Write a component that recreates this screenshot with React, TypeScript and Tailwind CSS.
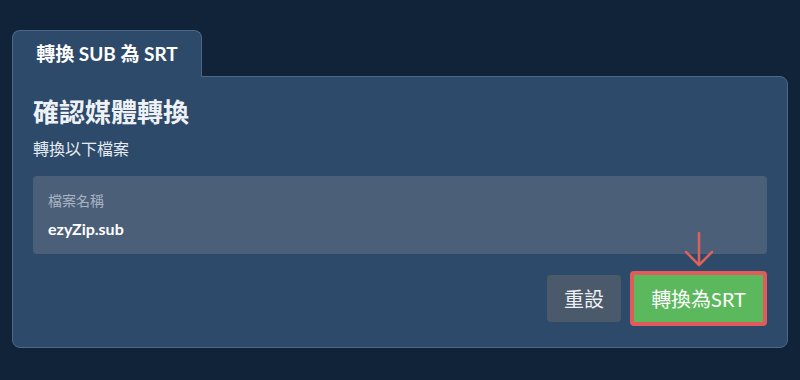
import React from "react";

export default function App() {
  return (
    <div className="w-[800px] h-[380px] bg-[#112339] pt-[30px] px-3 font-['Lato','Noto_Sans_CJK_TC',sans-serif] text-white">
      {/* Tab */}
      <div className="relative z-10 -mb-px w-[190px] h-[47px] rounded-t-lg border border-b-0 border-[#4d6787] bg-[#2d4a6a] flex items-center justify-center">
        <span className="text-[19px] font-bold">轉換 SUB 為 SRT</span>
      </div>

      {/* Card */}
      <div className="w-[776px] h-[272px] rounded-b-lg rounded-tr-lg border border-[#4d6787] bg-[#2d4a6a] px-5 pt-[19px]">
        <h2 className="text-[26px] font-bold leading-[32px] text-[#eef2f6]">確認媒體轉換</h2>
        <p className="mt-[11px] text-[16px] leading-[20px] text-[#e6ebf1]">轉換以下檔案</p>

        <div className="mt-[17px] h-[78px] rounded bg-[#4b5f78] px-[15px] pt-[16px]">
          <div className="text-[14px] leading-[18px] text-[#a8b4c3]">檔案名稱</div>
          <div className="mt-[9px] text-[16px] font-bold leading-[20px]">ezyZip.sub</div>
        </div>

        <div className="mt-[17px] flex justify-end items-center gap-[9px]">
          <button className="h-[47px] w-[74px] rounded bg-[#4b5a6b] text-[20px] text-[#eef1f4]">重設</button>
          <div className="relative">
            <svg className="absolute left-1/2 -translate-x-1/2 -top-[40px]" width="30" height="38" viewBox="0 0 30 38" fill="none" stroke="#e0605a" strokeWidth="2.5" strokeLinecap="round" strokeLinejoin="round">
              <path d="M15 2 V34" />
              <path d="M2 21 L15 34 L28 21" />
            </svg>
            <button className="h-[55px] w-[137px] rounded border-[4px] border-[#df5c5a] bg-[#5cb85c] text-[20px] text-white">轉換為SRT</button>
          </div>
        </div>
      </div>
    </div>
  );
}
